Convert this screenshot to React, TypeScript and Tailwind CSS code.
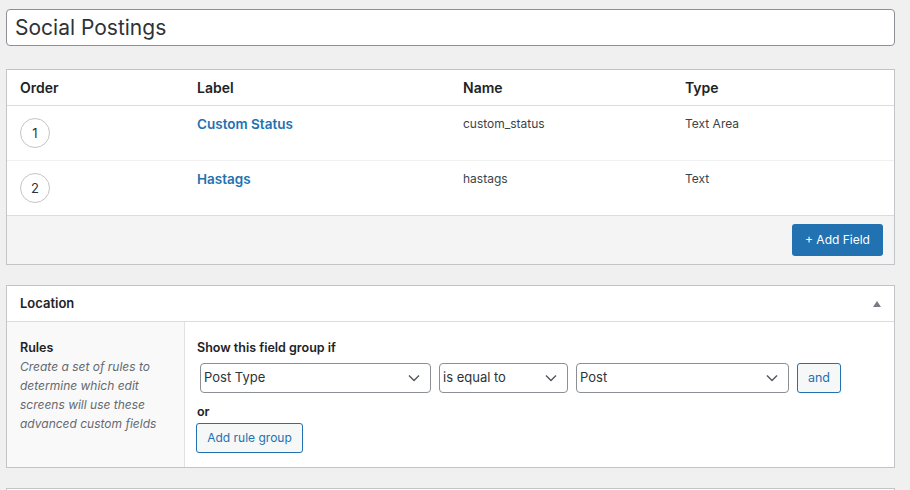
const font = "font-['Inter','Liberation_Sans',sans-serif]";

type Field = { order: number; label: string; name: string; type: string };

const fields: Field[] = [
  { order: 1, label: "Custom Status", name: "custom_status", type: "Text Area" },
  { order: 2, label: "Hastags", name: "hastags", type: "Text" },
];

function Chevron() {
  return (
    <svg width="12" height="8" viewBox="0 0 12 8" className="shrink-0">
      <polyline points="1,1.5 6,6.5 11,1.5" fill="none" stroke="#50575e" strokeWidth="1.4" />
    </svg>
  );
}

function Select({ value, width }: { value: string; width: string }) {
  return (
    <div
      className={`${width} flex h-[30px] items-center justify-between rounded-[4px] border border-[#8c8f94] bg-white pl-[3px] pr-[10px] text-[13px] text-[#2c3338]`}
    >
      <span>{value}</span>
      <Chevron />
    </div>
  );
}

export default function App() {
  return (
    <div className={`${font} h-[490px] w-[910px] overflow-hidden bg-[#f0f0f1] pl-[6px] pt-[9px]`}>
      <div className="w-[889px]">
        {/* title */}
        <div className="flex h-[37px] items-center rounded-[4px] border border-[#8c8f94] bg-white px-[8px] text-[21px] text-[#2c3338]">
          Social Postings
        </div>

        {/* fields table */}
        <div className="mt-[23px] border border-[#c3c4c7] bg-white">
          <div className="grid h-[36px] grid-cols-[177px_266px_222px_1fr] items-center border-b border-[#dcdcde] pl-[13px] text-[14px] font-semibold text-[#1d2327]">
            <span>Order</span>
            <span>Label</span>
            <span>Name</span>
            <span>Type</span>
          </div>
          {fields.map((f, i) => (
            <div
              key={f.order}
              className={`grid h-[55px] grid-cols-[177px_266px_222px_1fr] border-b pl-[13px] pt-[8px] text-[12px] leading-[20px] text-[#3c434a] ${
                i === fields.length - 1 ? "border-[#dcdcde]" : "border-[#f0f0f1]"
              }`}
            >
              <div>
                <div className="mt-[4px] flex h-[30px] w-[30px] items-center justify-center rounded-full border border-[#c3c4c7] text-[13px] text-[#2c3338]">
                  {f.order}
                </div>
              </div>
              <span className="text-[13.5px] font-semibold text-[#2271b1]">{f.label}</span>
              <span>{f.name}</span>
              <span>{f.type}</span>
            </div>
          ))}
          <div className="flex h-[48px] justify-end bg-[#f4f4f4] pr-[11px] pt-[8px]">
            <button
              type="button"
              className="h-[32px] w-[91px] rounded-[3px] bg-[#2271b1] text-[12px] text-white"
            >
              + Add Field
            </button>
          </div>
        </div>

        {/* location */}
        <div className="mt-[20px] border border-[#c3c4c7] bg-white">
          <div className="flex h-[36px] items-center justify-between border-b border-[#dcdcde] pl-[13px] pr-[12px]">
            <span className="text-[13px] font-semibold text-[#1d2327]">Location</span>
            <svg width="10" height="8" viewBox="0 0 10 8">
              <polygon points="5,1 9,7 1,7" fill="#787c82" />
            </svg>
          </div>
          <div className="flex h-[145px]">
            <div className="w-[178px] shrink-0 border-r border-[#e1e1e1] bg-[#f9f9f9] pl-[13px] pt-[16px] text-[12px] leading-[19px]">
              <div className="text-[12.5px] font-semibold text-[#1d2327]">Rules</div>
              <div className="italic text-[#646970]">
                <div>Create a set of rules to</div>
                <div>determine which edit</div>
                <div>screens will use these</div>
                <div>advanced custom fields</div>
              </div>
            </div>
            <div className="flex-1 pl-[12px] pt-[16px]">
              <div className="text-[12.5px] font-semibold leading-[19px] text-[#1d2327]">
                Show this field group if
              </div>
              <div className="mt-[6px] flex items-center gap-[8px] pl-[3px]">
                <Select value="Post Type" width="w-[231px]" />
                <Select value="is equal to" width="w-[129px]" />
                <Select value="Post" width="w-[213px]" />
                <button
                  type="button"
                  className="h-[30px] w-[44px] rounded-[3px] border border-[#2271b1] bg-[#f6f7f7] text-[12.5px] text-[#2271b1]"
                >
                  and
                </button>
              </div>
              <div className="mt-[9px] text-[12.5px] font-semibold leading-[19px] text-[#1d2327]">or</div>
              <button
                type="button"
                className="-ml-[1px] mt-[2px] h-[30px] w-[107px] rounded-[3px] border border-[#2271b1] bg-[#f6f7f7] text-[12px] text-[#2271b1]"
              >
                Add rule group
              </button>
            </div>
          </div>
        </div>

        <div className="mt-[20px] h-[20px] border border-[#c3c4c7] bg-white" />
      </div>
    </div>
  );
}
